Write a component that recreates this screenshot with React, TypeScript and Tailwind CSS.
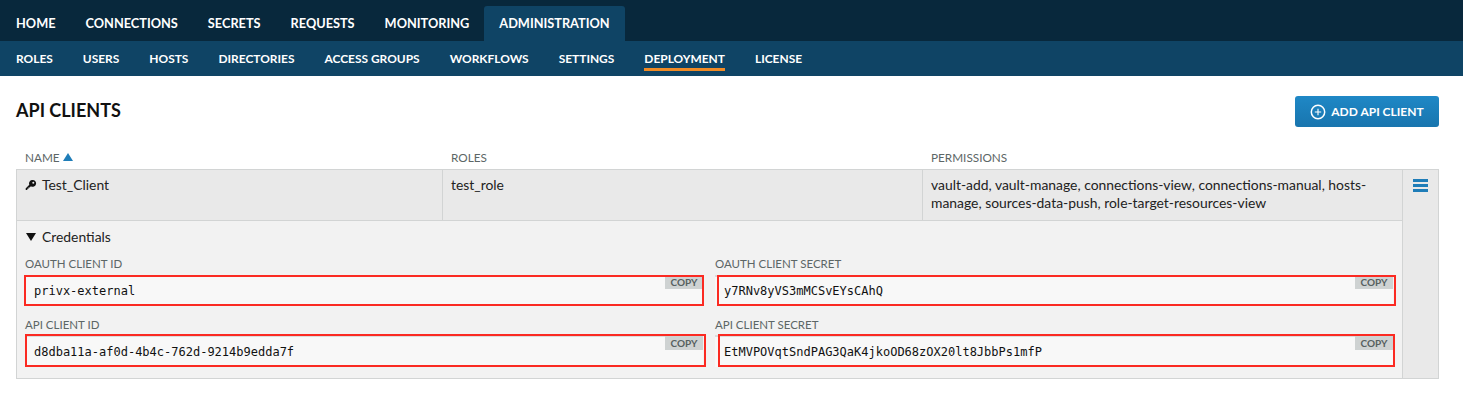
import React from 'react'

const mainNav = ['HOME', 'CONNECTIONS', 'SECRETS', 'REQUESTS', 'MONITORING']
const subNav = ['ROLES', 'USERS', 'HOSTS', 'DIRECTORIES', 'ACCESS GROUPS', 'WORKFLOWS', 'SETTINGS', 'DEPLOYMENT', 'LICENSE']

function Field({ label, value, tall, box }: { label: string; value: string; tall?: boolean; box: string }) {
  return (
    <div className="flex flex-col">
      <label className={`text-[11.5px] leading-[14px] text-[#5c6666] ${tall ? 'mb-[3px]' : 'mb-[4px]'}`}>{label}</label>
      <div
        className={`relative flex items-center bg-[#f8f8f8] border-t-2 border-[#dcdcdc] pl-[9px] font-['DejaVu_Sans_Mono',monospace] text-[12px] text-[#111] ${
          tall ? 'h-[32px]' : 'h-[30px]'
        }`}
      >
        {value}
        <span
          className={`absolute right-0 w-[38px] h-[14px] bg-[#ced2d2] text-center text-[10px] leading-[14px] font-bold text-[#566060] font-['Lato',sans-serif] ${
            tall ? 'top-[-1px]' : 'top-[-2px]'
          }`}
        >
          COPY
        </span>
        <span className={`absolute border-[2px] border-[#fb2a22] ${box}`} />
      </div>
    </div>
  )
}

export default function App() {
  return (
    <div className="min-h-[404px] bg-white font-['Lato',sans-serif] text-[#222]">
      <nav className="h-[41px] bg-[#08283c] flex items-end pl-[16px] text-white font-bold text-[12.75px]">
        <div className="flex gap-[30px] h-[35px] items-center">
          {mainNav.map((item) => (
            <a key={item}>{item}</a>
          ))}
        </div>
        <a className="ml-[15px] h-[35px] px-[15px] flex items-center bg-[#0f4465] rounded-t-[3px]">ADMINISTRATION</a>
      </nav>
      <nav className="h-[35px] bg-[#0f4465] flex items-center gap-[30px] pl-[16px] text-white font-bold text-[11.95px]">
        {subNav.map((item) => (
          <a key={item} className="relative">
            {item}
            {item === 'DEPLOYMENT' && (
              <span className="absolute left-0 right-0 top-[18px] h-[3px] bg-[#f08a24]" />
            )}
          </a>
        ))}
      </nav>
      <main className="px-[16px] pt-[20px] pr-[24px]">
        <div className="flex items-center justify-between h-[31px]">
          <h1 className="text-[18px] font-bold text-[#111] mb-[3px]">API CLIENTS</h1>
          <button className="w-[144px] h-[31px] flex items-center justify-center gap-[5px] rounded-[3px] bg-gradient-to-b from-[#1f88c6] to-[#1875ae] text-white text-[12px] font-bold">
            <svg width="16" height="16" viewBox="0 0 16 16" fill="none" stroke="currentColor">
              <circle cx="8" cy="8" r="6.7" strokeWidth="1.5" />
              <path d="M8 4.8v6.4M4.8 8h6.4" strokeWidth="1.1" />
            </svg>
            ADD API CLIENT
          </button>
        </div>
        <div className="grid grid-cols-[427px_480px_480px_36px] mt-[22px] h-[20px] text-[11.75px] text-[#5c6666]">
          <div className="pl-[9px] flex items-start gap-[3px]">
            NAME
            <svg width="10" height="8" viewBox="0 0 10 8" className="mt-[4px]" fill="#1f7db8">
              <path d="M5 0l5 8H0z" />
            </svg>
          </div>
          <div className="pl-[8px]">ROLES</div>
          <div className="pl-[8px]">PERMISSIONS</div>
        </div>
        <div className="flex border border-[#d2d4d4] h-[210px]">
          <div className="flex-1 min-w-0">
            <div className="grid grid-cols-[426px_480px_1fr] h-[51px] bg-[#e9e9e9] border-b border-[#d2d4d4] text-[13.9px] leading-[18px]">
              <div className="pl-[8px] pt-[6px] flex items-start gap-[5px] border-r border-[#d2d4d4]">
                <svg width="12" height="12" viewBox="0 0 12 12" className="mt-[3px]" fill="#111">
                  <path d="M7.6 1a3.4 3.4 0 1 1-1.7 6.3L4.7 8.5H3.5v1.2H2.3V11H.8L.6 9.5l3.7-3.8A3.4 3.4 0 0 1 7.6 1zm.7 1.7a1 1 0 1 0 0 2 1 1 0 0 0 0-2z" />
                </svg>
                Test_Client
              </div>
              <div className="pl-[8px] pt-[6px] border-r border-[#d2d4d4]">test_role</div>
              <div className="pl-[8px] pr-[20px] pt-[6px]">
                vault-add, vault-manage, connections-view, connections-manual, hosts-manage, sources-data-push, role-target-resources-view
              </div>
            </div>
            <div className="h-[157px] bg-[#f2f2f2] px-[8px] pt-[8px]">
              <div className="flex items-center gap-[6px] h-[16px] pl-[1px] text-[13.9px] text-[#222]">
                <svg width="10" height="8" viewBox="0 0 10 8" fill="#111">
                  <path d="M0 0h10L5 8z" />
                </svg>
                Credentials
              </div>
              <div className="grid grid-cols-[678px_678px] gap-x-[12px] gap-y-[13px] mt-[12px]">
                <Field label="OAUTH CLIENT ID" value="privx-external" box="left-[-1px] right-[-1px] top-[-2px] bottom-[-1px]" />
                <Field label="OAUTH CLIENT SECRET" value="y7RNv8yVS3mMCSvEYsCAhQ" box="left-[2px] right-[-3px] top-[-2px] bottom-[-1px]" />
                <Field label="API CLIENT ID" value="d8dba11a-af0d-4b4c-762d-9214b9edda7f" tall box="left-0 right-[-3px] top-[-3px] bottom-0" />
                <Field label="API CLIENT SECRET" value="EtMVPOVqtSndPAG3QaK4jkoOD68zOX20lt8JbbPs1mfP" tall box="left-[3px] right-[-2px] top-[-3px] bottom-0" />
              </div>
            </div>
          </div>
          <div className="w-[36px] shrink-0 bg-[#e9e9e9] border-l border-[#d2d4d4] flex justify-center pt-[9px]">
            <svg width="15" height="14" viewBox="0 0 15 14" fill="#1f7db8">
              <rect y="0" width="15" height="3" />
              <rect y="5" width="15" height="3" />
              <rect y="10" width="15" height="3" />
            </svg>
          </div>
        </div>
      </main>
    </div>
  )
}
